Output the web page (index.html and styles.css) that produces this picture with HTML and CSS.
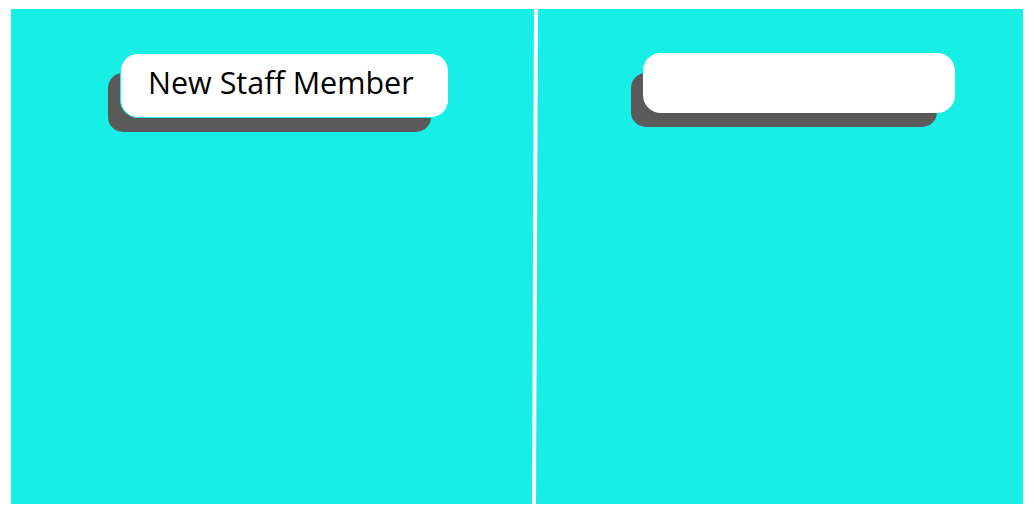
FILE: index.html
```html
<!DOCTYPE html>
<html>
<head>
<meta charset="utf-8">
<link rel="stylesheet" href="styles.css">
</head>
<body>
<div class="stage">
  <div class="panel panel-left">
    <div class="field field-filled">New Staff Member</div>
  </div>
  <div class="divider"></div>
  <div class="panel panel-right">
    <div class="field field-empty"></div>
  </div>
</div>
</body>
</html>
```
FILE: styles.css
```css
html, body {
  margin: 0;
  padding: 0;
  background: #ffffff;
}
body {
  width: 1034px;
  height: 532px;
  font-family: "Open Sans", "Noto Sans", sans-serif;
}
.stage {
  position: relative;
  margin: 9px 0 0 11px;
  width: 1012px;
  height: 495px;
  display: flex;
  background: #17eee5;
}
.panel {
  box-sizing: border-box;
  padding-top: 44px;
}
.panel-left {
  width: 522px;
  padding-left: 109px;
}
.panel-right {
  width: 486px;
  padding-left: 106px;
}
.divider {
  width: 4px;
  background: #ffffff;
  transform: skewX(-0.23deg);
}
.field {
  box-sizing: border-box;
  background: #ffffff;
  border-radius: 18px;
  box-shadow: -15px 17px 0 -3px #5a5a5a;
}
.field-filled {
  width: 329px;
  height: 65px;
  border: 1px solid #17eee5;
  padding-left: 27px;
  padding-top: 0;
  font-size: 30.5px;
  line-height: 56px;
  color: #000000;
}
.field-empty {
  width: 312px;
  height: 60px;
}
```
